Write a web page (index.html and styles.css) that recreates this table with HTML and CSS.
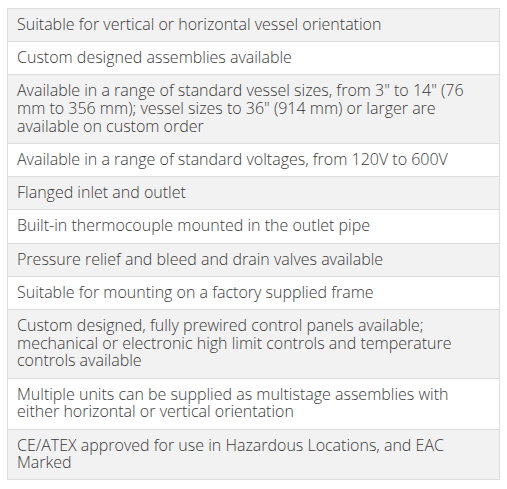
FILE: index.html
```html
<!DOCTYPE html>
<html>
<head>
<meta charset="utf-8">
<link rel="stylesheet" href="styles.css">
</head>
<body>
<table class="specs">
<tbody>
<tr><td>Suitable for vertical or horizontal vessel orientation</td></tr>
<tr><td>Custom designed assemblies available</td></tr>
<tr><td>Available in a range of standard vessel sizes, from 3" to 14" (76 mm to 356 mm); vessel sizes to 36" (914 mm) or larger are available on custom order</td></tr>
<tr><td>Available in a range of standard voltages, from 120V to 600V</td></tr>
<tr><td>Flanged inlet and outlet</td></tr>
<tr><td>Built-in thermocouple mounted in the outlet pipe</td></tr>
<tr><td>Pressure relief and bleed and drain valves available</td></tr>
<tr><td>Suitable for mounting on a factory supplied frame</td></tr>
<tr><td>Custom designed, fully prewired control panels available; mechanical or electronic high limit controls and temperature controls available</td></tr>
<tr><td>Multiple units can be supplied as multistage assemblies with either horizontal or vertical orientation</td></tr>
<tr><td>CE/ATEX approved for use in Hazardous Locations, and EAC Marked</td></tr>
</tbody>
</table>
</body>
</html>
```
FILE: styles.css
```css
html, body {
  margin: 0;
  padding: 0;
  background: #ffffff;
}
body {
  padding: 8px 8px 8px 7px;
  font-family: "Open Sans", "Noto Sans", sans-serif;
  font-weight: 300;
  font-size: 16px;
  color: #3a3a3a;
}
.specs {
  width: 493px;
  border-collapse: separate;
  border-spacing: 0;
  border: 1px solid #dddddd;
  border-bottom: none;
}
.specs td {
  padding: 7px 8px 7.5px 9px;
  line-height: 17.7px;
  border-bottom: 1px solid #dddddd;
  vertical-align: top;
}
.specs tr:nth-child(odd) td {
  background: #f2f2f2;
}
.specs tr:nth-child(even) td {
  background: #ffffff;
}
```
